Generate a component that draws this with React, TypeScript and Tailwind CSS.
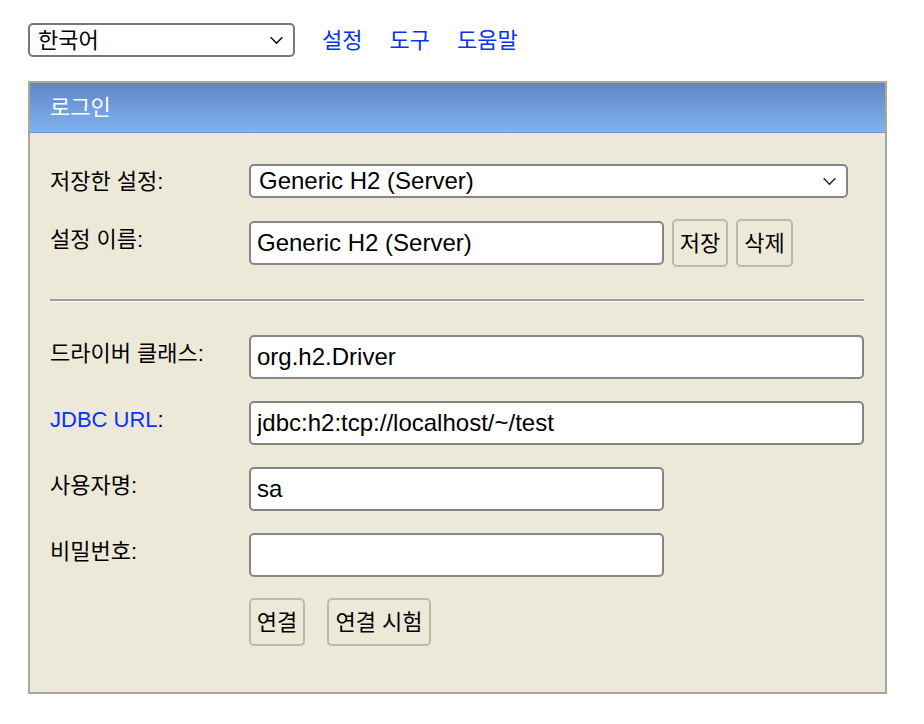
import React from 'react';

const KO = '[font-family:"Liberation_Sans","Noto_Sans_CJK_KR",sans-serif]';

function Chevron({ className }: { className?: string }) {
  return (
    <svg viewBox="0 0 16 10" className={className} fill="none" stroke="currentColor" strokeWidth="1.6">
      <path d="M1.5 1.5 L8 8 L14.5 1.5" />
    </svg>
  );
}

function Field({ value, wide }: { value: string; wide?: boolean }) {
  return (
    <input
      readOnly
      value={value}
      className={`${wide ? 'flex-1' : 'w-[415px]'} h-[44px] bg-white border-2 border-[#858585] rounded-[5px] px-[6px] text-[24px] text-black outline-none font-['Liberation_Sans',sans-serif]`}
    />
  );
}

function Btn({ label, w }: { label: string; w: string }) {
  return (
    <button className={`${w} h-[48px] border-2 border-[#bdb9a9] rounded-[5px] bg-[#ece9d8] text-[22px] text-black ${KO}`}>
      {label}
    </button>
  );
}

function Row({ label, children }: { label: React.ReactNode; children: React.ReactNode }) {
  return (
    <div className="flex items-center">
      <div className={`w-[199px] shrink-0 pb-2 text-[22px] text-black ${KO}`}>{label}</div>
      {children}
    </div>
  );
}

export default function App() {
  return (
    <div className={`min-h-[724px] bg-white pl-[28px] pt-[23px] ${KO}`}>
      {/* top bar */}
      <div className="flex items-center gap-[27px]">
        <div className="w-[267px] h-[34px] border-2 border-[#777] rounded-[5px] bg-white flex items-center justify-between pl-[8px] pr-[9px]">
          <span className="text-[22px] text-black">한국어</span>
          <Chevron className="w-[15px] h-[9px] text-black" />
        </div>
        <a className="text-[22px] text-[#0a32f5]">설정</a>
        <a className="text-[22px] text-[#0a32f5]">도구</a>
        <a className="text-[22px] text-[#0a32f5]">도움말</a>
      </div>

      {/* login panel */}
      <div className="mt-[24px] w-[859px] border-2 border-[#aca899] bg-[#ece9d8]">
        <div className="h-[50px] bg-gradient-to-b from-[#5e86c5] to-[#82b2f0] border-b border-[#6e94cc] flex items-center pl-[20px]">
          <span className="text-[22px] text-white">로그인</span>
        </div>

        <div className="pl-[20px] pr-[21px] pt-[31px] pb-[46px]">
          <div className="flex items-center">
            <div className="w-[199px] shrink-0 text-[22px] text-black">저장한 설정:</div>
            <div className="w-[599px] h-[34px] bg-white border-2 border-[#858585] rounded-[5px] flex items-center justify-between pl-[8px] pr-[9px]">
              <span className="text-[24px] text-black font-['Liberation_Sans',sans-serif]">Generic H2 (Server)</span>
              <Chevron className="w-[15px] h-[9px] text-[#222]" />
            </div>
          </div>

          <div className="mt-[21px]">
            <Row label="설정 이름:">
              <div className="flex items-center gap-[8px]">
                <Field value="Generic H2 (Server)" />
                <Btn label="저장" w="w-[56px]" />
                <Btn label="삭제" w="w-[57px]" />
              </div>
            </Row>
          </div>

          <div className="mt-[32px] h-[3px] border-t-2 border-[#9c9c9c] border-b border-b-white" />

          <div className="mt-[33px] flex flex-col gap-[22px]">
            <Row label="드라이버 클래스:">
              <Field value="org.h2.Driver" wide />
            </Row>
            <Row label={<><span className="text-[#0a32f5]">JDBC URL</span><span className="text-black">:</span></>}>
              <Field value="jdbc:h2:tcp://localhost/~/test" wide />
            </Row>
            <Row label="사용자명:">
              <Field value="sa" />
            </Row>
            <Row label="비밀번호:">
              <Field value="" />
            </Row>
          </div>

          <div className="mt-[21px] pl-[199px] flex gap-[22px]">
            <Btn label="연결" w="w-[56px]" />
            <Btn label="연결 시험" w="w-[104px]" />
          </div>
        </div>
      </div>
    </div>
  );
}
